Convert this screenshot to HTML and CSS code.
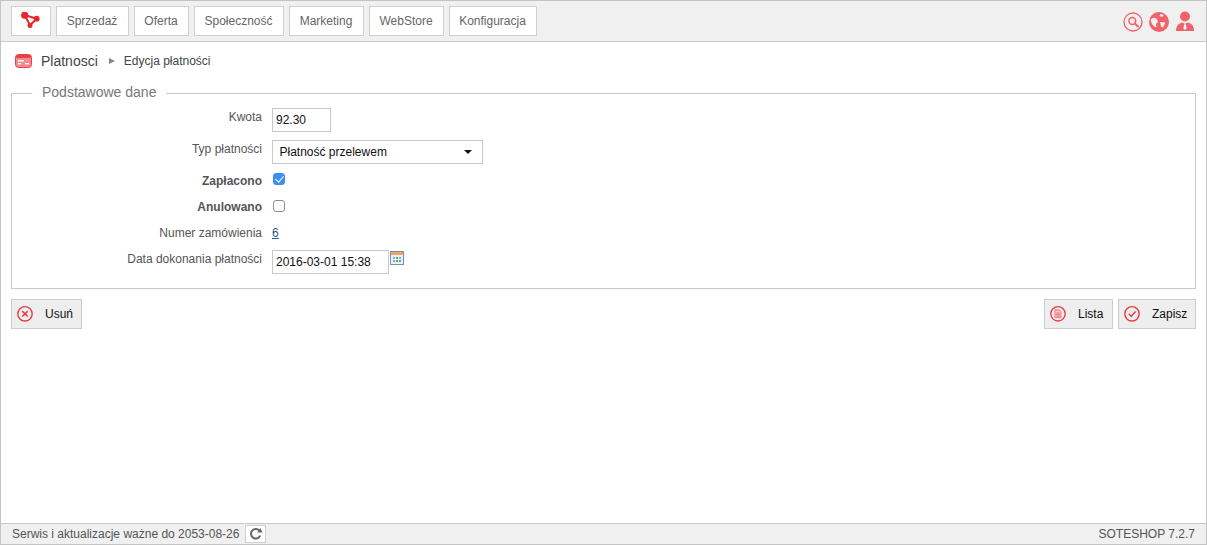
FILE: index.html
```html
<!DOCTYPE html>
<html lang="pl">
<head>
<meta charset="utf-8">
<title>Edycja płatności</title>
<link rel="stylesheet" href="styles.css">
</head>
<body>
<div class="frame">
  <header class="topbar">
    <nav class="menu">
      <a class="tab tab-logo" href="#">
        <svg width="20" height="18" viewBox="0 0 20 18"><path d="M3.700 3 L15.700 6.700 L9 13.300 Z" fill="none" stroke="#e8262d" stroke-width="2"/><circle cx="3.700" cy="3.200" r="3.600" fill="#e8262d"/><circle cx="15.700" cy="6.700" r="2.900" fill="#e8262d"/><circle cx="9" cy="13.500" r="2.500" fill="#e8262d"/></svg>
      </a>
      <a class="tab tab-sprzedaz" href="#">Sprzedaż</a>
      <a class="tab tab-oferta" href="#">Oferta</a>
      <a class="tab tab-spol" href="#">Społeczność</a>
      <a class="tab tab-mark" href="#">Marketing</a>
      <a class="tab tab-web" href="#">WebStore</a>
      <a class="tab tab-konf" href="#">Konfiguracja</a>
    </nav>
    <div class="tools">
      <svg width="20" height="20" viewBox="0 0 20 20"><circle cx="10" cy="10" r="9" fill="none" stroke="#f0626a" stroke-width="1.300"/><circle cx="9.300" cy="9" r="3.400" fill="none" stroke="#f0626a" stroke-width="1.500"/><path d="M11.800 11.500 L15 14.500" stroke="#f0626a" stroke-width="2" stroke-linecap="round"/></svg>
      <svg width="20" height="20" viewBox="0 0 20 20"><circle cx="10" cy="10" r="10" fill="#f0626a"/><path d="M1.500 8 C3 5.500 6.500 5 8 7.500 C9.500 9 9 11 7 11.500 L7.500 15.500 C5 15 2.500 12.500 1.500 8Z M11 10 L16.500 10.500 L14 15.500 L12 14.500Z M11.500 2 L15 3 L13 5 L10.500 4Z" fill="#f5eeee"/></svg>
      <svg class="tool-user" width="20" height="21" viewBox="0 0 20 21"><circle cx="10" cy="5.500" r="5" fill="#f0626a"/><path d="M1 20 C1 14 4.500 12 7.500 11.500 L10 13 L12.500 11.500 C15.500 12 19 14 19 20Z" fill="#f0626a"/><path d="M9 13.500h2l0.500 4-1.500 1.500-1.500-1.500z" fill="#fff"/></svg>
    </div>
  </header>

  <main class="content">
    <div class="crumbs">
      <svg class="crumb-icon" width="17" height="14" viewBox="0 0 17 14"><rect x="0.500" y="0.500" width="16" height="13" rx="3" fill="#f58a90" stroke="#ea3f47"/><rect x="1" y="1" width="15" height="3" rx="1.500" fill="#ea3f47"/><rect x="3" y="6" width="6" height="1.500" fill="#fff"/><rect x="3" y="9" width="3" height="1.300" fill="#fff"/><rect x="10" y="9" width="4" height="1.300" fill="#fff"/></svg>
      <span class="crumb-main">Platnosci</span>
      <span class="crumb-arrow"></span>
      <span class="crumb-sub">Edycja płatności</span>
    </div>

    <fieldset class="panel">
      <legend>Podstawowe dane</legend>
      <div class="row row-kwota">
        <label class="lbl">Kwota</label>
        <input class="field field-kwota" type="text" value="92.30">
      </div>
      <div class="row row-typ">
        <label class="lbl">Typ płatności</label>
        <div class="select-box">
          <select class="field field-select"><option>Płatność przelewem</option></select>
          <span class="caret"></span>
        </div>
      </div>
      <div class="row row-zap">
        <label class="lbl lbl-bold">Zapłacono</label>
        <input class="check" type="checkbox" checked>
      </div>
      <div class="row row-anu">
        <label class="lbl lbl-bold">Anulowano</label>
        <input class="check" type="checkbox">
      </div>
      <div class="row row-num">
        <label class="lbl">Numer zamówienia</label>
        <a class="order-link" href="#">6</a>
      </div>
      <div class="row row-data">
        <label class="lbl">Data dokonania płatności</label>
        <input class="field field-date" type="text" value="2016-03-01 15:38">
        <svg class="cal" width="14" height="14" viewBox="0 0 14 14"><rect x="0.500" y="0.500" width="13" height="13" fill="#e9f1f8" stroke="#6f96b8"/><rect x="1" y="1" width="12" height="3" fill="#f2a35e"/><path d="M3 6h2v2H3zM9 6h2v2H9zM3 9h2v2H3z" fill="#8db0cc"/><path d="M6 6h2v2H6zM6 9h2v2H6zM9 9h2v2H9z" fill="#5fae5a"/></svg>
      </div>
    </fieldset>

    <div class="actions">
      <a class="btn btn-usun" href="#">
        <svg width="18" height="18" viewBox="0 0 18 18"><circle cx="8" cy="8.800" r="7.200" fill="none" stroke="#ea3a44" stroke-width="1.400"/><path d="M5.300 6.100l5.400 5.400M10.700 6.100l-5.400 5.400" stroke="#ea3a44" stroke-width="1.500"/></svg>
        <span>Usuń</span>
      </a>
      <div class="actions-right">
        <a class="btn btn-lista" href="#">
          <svg width="18" height="18" viewBox="0 0 18 18"><circle cx="8" cy="8.800" r="7.200" fill="none" stroke="#ea3a44" stroke-width="1.300"/><path d="M5 4.800h4.200l1.800 2v6h-6z" fill="#f8c4c7" stroke="#ea3a44" stroke-width="0.600"/><path d="M6.200 8h3.600M6.200 9.600h3.600M6.200 11.200h3.600" stroke="#ea3a44" stroke-width="0.600"/></svg>
          <span>Lista</span>
        </a>
        <a class="btn btn-zapisz" href="#">
          <svg width="18" height="18" viewBox="0 0 18 18"><circle cx="8" cy="8.800" r="7.200" fill="none" stroke="#ea3a44" stroke-width="1.400"/><path d="M4.800 8.800l2.400 2.600 4.300-5" fill="none" stroke="#ea3a44" stroke-width="1.500"/></svg>
          <span>Zapisz</span>
        </a>
      </div>
    </div>
  </main>

  <footer class="statusbar">
    <div class="status-left">
      <span>Serwis i aktualizacje ważne do 2053-08-26</span>
      <a class="refresh" href="#">
        <svg width="14" height="14" viewBox="0 0 14 14"><path d="M11.300 8.500A4.800 4.800 0 1 1 10.500 3.600" fill="none" stroke="#666" stroke-width="2"/><path d="M8.200 5.500h5.300L11.500 1z" fill="#666"/></svg>
      </a>
    </div>
    <span class="version">SOTESHOP 7.2.7</span>
  </footer>
</div>
</body>
</html>
```

FILE: styles.css
```css
* { box-sizing: border-box; }
html, body { margin: 0; height: 100%; }
body {
  font-family: "Liberation Sans", Arial, sans-serif;
  font-size: 12px;
  color: #555;
  background: #fff;
}
a { text-decoration: none; }

.frame {
  height: 545px;
  display: flex;
  flex-direction: column;
  border: 1px solid #c4c4c4;
}

.topbar {
  height: 41px;
  flex: none;
  background: #f0f0f0;
  border-bottom: 1px solid #c8c8c8;
  display: flex;
  justify-content: space-between;
  align-items: flex-start;
  padding: 5px 11px 0 10px;
}
.menu { display: flex; gap: 5px; }
.tab {
  height: 30px;
  display: flex;
  align-items: center;
  justify-content: center;
  padding-right: 1px;
  background: #fff;
  border: 1px solid #cfcfcf;
  color: #666;
  font-size: 12px;
}
.tab-logo { width: 40px; padding-right: 0; }
.tab-sprzedaz { width: 73px; }
.tab-oferta { width: 55px; }
.tab-spol { width: 90px; }
.tab-mark { width: 75px; }
.tab-web { width: 75px; }
.tab-konf { width: 88px; }

.tools {
  display: flex;
  align-items: center;
  gap: 6px;
  margin-top: 5px;
}

.content { flex: 1; padding: 0 10px; }

.crumbs {
  height: 38px;
  display: flex;
  align-items: center;
  padding-left: 4px;
  color: #444;
}
.crumb-icon { margin-right: 9px; }
.crumb-main { font-size: 14px; margin-right: 11px; }
.crumb-arrow {
  width: 0;
  height: 0;
  border-left: 6px solid #888;
  border-top: 3.500px solid transparent;
  border-bottom: 3.500px solid transparent;
  margin-right: 9px;
}
.crumb-sub { font-size: 12px; }

.panel {
  margin: 4px 0 0;
  padding: 0;
  height: 205px;
  border: 1px solid #c8c8c8;
  min-width: 0;
}
.panel legend {
  margin-left: 20px;
  padding: 0 10px 2px;
  font-size: 14px;
  color: #777;
  line-height: 16px;
}

.row { display: flex; align-items: flex-start; }
.lbl {
  width: 250px;
  margin-right: 10px;
  text-align: right;
  font-size: 12px;
  color: #555;
  flex: none;
}
.lbl-bold { font-weight: bold; }

.field {
  height: 24px;
  margin: 0;
  padding: 0 3px;
  border: 1px solid #c8c8c8;
  border-radius: 0;
  background: #fff;
  color: #111;
  font-family: "Liberation Sans", Arial, sans-serif;
  font-size: 12px;
  outline: none;
}
.field-kwota { width: 59px; }
.field-date { width: 117px; }
.select-box { position: relative; width: 211px; height: 24px; }
.field-select {
  width: 100%;
  appearance: none;
  padding-left: 7px;
  text-indent: -0.5px;
}
.caret {
  position: absolute;
  right: 11px;
  top: 10px;
  border-left: 4px solid transparent;
  border-right: 4px solid transparent;
  border-top: 4px solid #111;
}

.row-kwota { margin-top: 6px; }
.row-kwota .lbl { padding-top: 2px; }
.row-typ { margin-top: 8px; }
.row-typ .lbl { padding-top: 2px; }
.row-zap { margin-top: 9px; }
.row-zap .lbl { padding-top: 1px; }
.row-anu { margin-top: 12px; }
.row-num { margin-top: 12px; }
.row-data { margin-top: 10px; }
.row-data .lbl { padding-top: 2px; }

.check {
  appearance: none;
  width: 12px;
  height: 12px;
  margin: 0 0 0 1px;
  border: 1px solid #8e8e8e;
  border-radius: 3px;
  background: #fff;
  position: relative;
}
.check:checked { background: #3d8ff5; border-color: #3d8ff5; }
.check:checked::after {
  content: "";
  position: absolute;
  left: 3px;
  top: 0;
  width: 4px;
  height: 7px;
  border: solid #fff;
  border-width: 0 1.500px 1.500px 0;
  transform: rotate(40deg);
}
.order-link { color: #1f5a94; text-decoration: underline; }
.cal { margin: 1px 0 0 1px; }

.actions {
  display: flex;
  justify-content: space-between;
  margin-top: 10px;
}
.actions-right { display: flex; gap: 5px; }
.btn {
  height: 30px;
  display: flex;
  align-items: center;
  background: #eee;
  border: 1px solid #ccc;
  color: #111;
  font-size: 12px;
  padding-left: 5px;
}
.btn svg { margin-right: 10px; }
.btn-usun { width: 71px; }
.btn-lista { width: 69px; }
.btn-zapisz { width: 78px; }

.statusbar {
  height: 21px;
  flex: none;
  background: #f0f0f0;
  border-top: 1px solid #c8c8c8;
  display: flex;
  justify-content: space-between;
  align-items: center;
  padding: 0 11px;
  color: #555;
  font-size: 12px;
}
.status-left { display: flex; align-items: center; gap: 6px; }
.refresh {
  width: 21px;
  height: 18px;
  display: flex;
  align-items: center;
  justify-content: center;
  background: #fff;
  border: 1px solid #cfcfcf;
}
```
